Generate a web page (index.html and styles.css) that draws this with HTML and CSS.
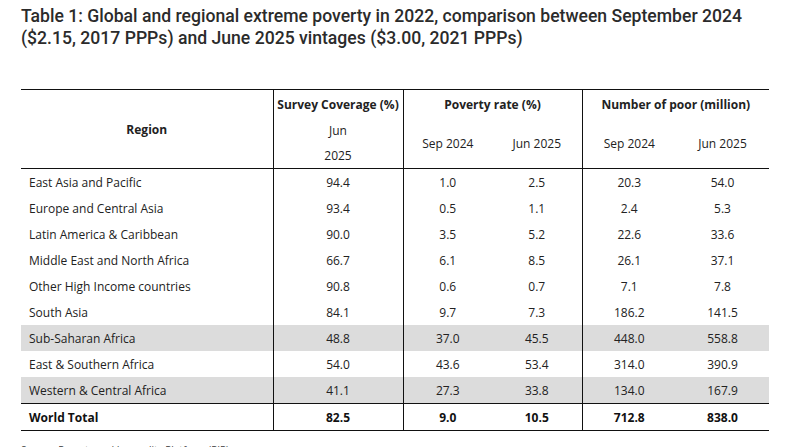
FILE: index.html
```html
<!DOCTYPE html>
<html>
<head>
<meta charset="utf-8">
<link rel="stylesheet" href="styles.css">
</head>
<body>
<div class="page">
  <h1 class="title">Table 1: Global and regional extreme poverty in 2022, comparison between September 2024 ($2.15, 2017 PPPs) and June 2025 vintages ($3.00, 2021 PPPs)</h1>
  <table class="tbl">
    <colgroup>
      <col class="c-region"><col class="c-cov"><col class="c-a"><col class="c-b"><col class="c-c"><col class="c-d">
    </colgroup>
    <thead>
      <tr class="h1">
        <th rowspan="2" class="region-h sep">Region</th>
        <th class="sep">Survey Coverage (%)</th>
        <th colspan="2" class="sep">Poverty rate (%)</th>
        <th colspan="2">Number of poor (million)</th>
      </tr>
      <tr class="h2">
        <td class="sep">Jun<br>2025</td>
        <td>Sep 2024</td>
        <td class="sep">Jun 2025</td>
        <td>Sep 2024</td>
        <td>Jun 2025</td>
      </tr>
    </thead>
    <tbody>
      <tr><td class="name sep">East Asia and Pacific</td><td class="sep">94.4</td><td>1.0</td><td class="sep">2.5</td><td>20.3</td><td>54.0</td></tr>
      <tr><td class="name sep">Europe and Central Asia</td><td class="sep">93.4</td><td>0.5</td><td class="sep">1.1</td><td>2.4</td><td>5.3</td></tr>
      <tr><td class="name sep">Latin America &amp; Caribbean</td><td class="sep">90.0</td><td>3.5</td><td class="sep">5.2</td><td>22.6</td><td>33.6</td></tr>
      <tr><td class="name sep">Middle East and North Africa</td><td class="sep">66.7</td><td>6.1</td><td class="sep">8.5</td><td>26.1</td><td>37.1</td></tr>
      <tr><td class="name sep">Other High Income countries</td><td class="sep">90.8</td><td>0.6</td><td class="sep">0.7</td><td>7.1</td><td>7.8</td></tr>
      <tr><td class="name sep">South Asia</td><td class="sep">84.1</td><td>9.7</td><td class="sep">7.3</td><td>186.2</td><td>141.5</td></tr>
      <tr class="shade"><td class="name sep">Sub-Saharan Africa</td><td class="sep">48.8</td><td>37.0</td><td class="sep">45.5</td><td>448.0</td><td>558.8</td></tr>
      <tr><td class="name sep">East &amp; Southern Africa</td><td class="sep">54.0</td><td>43.6</td><td class="sep">53.4</td><td>314.0</td><td>390.9</td></tr>
      <tr class="shade"><td class="name sep">Western &amp; Central Africa</td><td class="sep">41.1</td><td>27.3</td><td class="sep">33.8</td><td>134.0</td><td>167.9</td></tr>
      <tr class="total"><td class="name sep">World Total</td><td class="sep">82.5</td><td>9.0</td><td class="sep">10.5</td><td>712.8</td><td>838.0</td></tr>
    </tbody>
  </table>
  <p class="source">Source: Poverty and Inequality Platform (PIP)</p>
</div>
</body>
</html>
```

FILE: styles.css
```css
html, body {
  margin: 0;
  padding: 0;
  background: #ffffff;
}

.page {
  padding: 5px 21px 0 21px;
}

.title {
  margin: 0;
  width: 760px;
  font-family: Roboto, "Noto Sans", sans-serif;
  font-weight: 500;
  font-size: 17.6px;
  line-height: 22px;
  color: #2b2b2b;
}

.tbl {
  margin-top: 40px;
  width: 748px;
  border-collapse: collapse;
  table-layout: fixed;
  font-family: "Open Sans", "Noto Sans", sans-serif;
  font-size: 12px;
  color: #222222;
  border-top: 1px solid #111111;
  border-bottom: 1px solid #111111;
}

.c-region { width: 252px; }
.c-cov { width: 130px; }
.c-a { width: 89px; }
.c-b { width: 90px; }
.c-c { width: 94px; }
.c-d { width: 93px; }

.tbl th,
.tbl td {
  padding: 0;
  text-align: center;
  vertical-align: middle;
}

.tbl .sep {
  border-right: 1px solid #111111;
}

.tbl thead th {
  font-weight: 700;
  height: 28px;
}

.tbl thead .h2 td {
  height: 50px;
  line-height: 25px;
}

.tbl thead {
  border-bottom: 1px solid #111111;
}

.tbl tbody td {
  height: 26px;
}

.tbl tbody td.name {
  text-align: left;
  padding-left: 8px;
}

.tbl tbody tr.shade td {
  background: #dcdcdc;
}

.tbl tbody tr.total {
  border-top: 1px solid #111111;
}

.tbl tbody tr.total td {
  font-weight: 700;
  height: 26px;
  color: #111111;
}

.source {
  margin: 12px 0 0 0;
  font-family: "Open Sans", "Noto Sans", sans-serif;
  font-size: 10px;
  color: #444444;
}
```
